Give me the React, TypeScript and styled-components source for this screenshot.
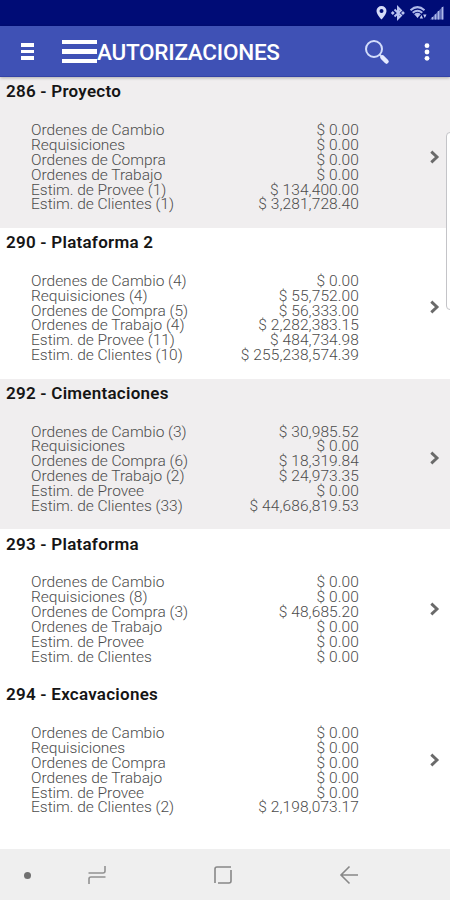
import React from "react";
import styled, { createGlobalStyle } from "styled-components";

const GlobalStyle = createGlobalStyle`
  * { box-sizing: border-box; }
  body { margin: 0; background: #fff; font-family: Roboto, "Liberation Sans", sans-serif; }
`;

const Screen = styled.div`
  position: relative;
  display: flex;
  flex-direction: column;
  width: 450px;
  height: 900px;
  overflow: hidden;
  background: #fff;
`;

const StatusBar = styled.header`
  display: flex;
  flex: none;
  justify-content: flex-end;
  align-items: center;
  height: 26px;
  padding-right: 6px;
  background: #000c76;
`;

const AppBar = styled.div`
  display: flex;
  flex: none;
  align-items: center;
  height: 51px;
  padding: 1px 0 0 21px;
  background: #3f51b5;
  border-bottom: 1px solid #3443a6;
  box-shadow: 0 1px 3px rgba(0, 0, 0, 0.28);
  z-index: 1;
`;

const Bars = styled.div<{ $width: number; $gap: number; $thick: number }>`
  display: flex;
  flex-direction: column;
  gap: ${(p) => p.$gap}px;
  width: ${(p) => p.$width}px;
  &::before, &::after, i { content: ""; display: block; height: ${(p) => p.$thick}px; background: #fff; }
`;

const MenuGroup = styled.div`
  display: flex;
  align-items: center;
  gap: 28px;
`;

const Title = styled.h1`
  flex: 1;
  margin: 0;
  font-size: 22.5px;
  line-height: 28px;
  font-weight: 500;
  letter-spacing: -0.25px;
  color: #fff;
`;

const Actions = styled.div`
  display: flex;
  align-items: center;
  gap: 34px;
  padding-right: 20.5px;
`;

const Projects = styled.main`
  flex: 1;
  min-height: 0;
`;

const Project = styled.section<{ $shaded: boolean }>`
  height: 150.75px;
  background: ${(p) => (p.$shaded ? "#f0eeef" : "#fff")};
`;

const ProjectName = styled.h2`
  margin: 0;
  padding: 4.4px 0 0 6px;
  height: 46px;
  font-size: 17px;
  line-height: 20px;
  font-weight: 600;
  letter-spacing: 0.25px;
  white-space: nowrap;
  color: #151515;
`;

const Details = styled.div`
  display: flex;
  padding-left: 31px;
`;

const Lines = styled.div`
  width: 328px;
`;

const Line = styled.div`
  display: flex;
  justify-content: space-between;
  height: 14.9px;
  font-size: 15.5px;
  line-height: 14.9px;
  font-weight: 300;
  white-space: nowrap;
  color: #4c4c4c;
`;

const Label = styled.span`
  letter-spacing: -0.02px;
`;

const Amount = styled.span`
  letter-spacing: 0.1px;
`;

const Chevron = styled.svg`
  margin: 26.5px 0 0 69.5px;
`;

const EdgeHandle = styled.div`
  position: absolute;
  top: 132px;
  right: -10px;
  width: 14px;
  height: 178px;
  border: 1px solid #c4c4c8;
  border-radius: 4px;
  background: #fff;
`;

const NavBar = styled.nav`
  display: grid;
  flex: none;
  grid-template-columns: 54px 86px 166px 86px;
  align-items: center;
  justify-items: center;
  height: 51px;
  padding-top: 1px;
  background: #efefef;
`;

const Dot = styled.span`
  width: 7px;
  height: 7px;
  border-radius: 50%;
  background: #707070;
`;

const projects: { name: string; rows: [string, string][] }[] = [
  { name: "286 - Proyecto", rows: [["Ordenes de Cambio", "0.00"], ["Requisiciones", "0.00"], ["Ordenes de Compra", "0.00"], ["Ordenes de Trabajo", "0.00"], ["Estim. de Provee (1)", "134,400.00"], ["Estim. de Clientes (1)", "3,281,728.40"]] },
  { name: "290 - Plataforma 2", rows: [["Ordenes de Cambio (4)", "0.00"], ["Requisiciones (4)", "55,752.00"], ["Ordenes de Compra (5)", "56,333.00"], ["Ordenes de Trabajo (4)", "2,282,383.15"], ["Estim. de Provee (11)", "484,734.98"], ["Estim. de Clientes (10)", "255,238,574.39"]] },
  { name: "292 - Cimentaciones", rows: [["Ordenes de Cambio (3)", "30,985.52"], ["Requisiciones", "0.00"], ["Ordenes de Compra (6)", "18,319.84"], ["Ordenes de Trabajo (2)", "24,973.35"], ["Estim. de Provee", "0.00"], ["Estim. de Clientes (33)", "44,686,819.53"]] },
  { name: "293 - Plataforma", rows: [["Ordenes de Cambio", "0.00"], ["Requisiciones (8)", "0.00"], ["Ordenes de Compra (3)", "48,685.20"], ["Ordenes de Trabajo", "0.00"], ["Estim. de Provee", "0.00"], ["Estim. de Clientes", "0.00"]] },
  { name: "294 - Excavaciones", rows: [["Ordenes de Cambio", "0.00"], ["Requisiciones", "0.00"], ["Ordenes de Compra", "0.00"], ["Ordenes de Trabajo", "0.00"], ["Estim. de Provee", "0.00"], ["Estim. de Clientes (2)", "2,198,073.17"]] },
];

const StatusIcons = () => (
  <svg width="70" height="16" viewBox="374 5 70 16" fill="none">
    <path fillRule="evenodd" fill="#d5dbf8" d="M381.5 6a5 5 0 0 0-5 5c0 3.4 5 8.5 5 8.500s5-5.100 5-8.500a5 5 0 0 0-5-5Zm0 3a2 2 0 1 1 0 4 2 2 0 0 1 0-4Z" />
    <path stroke="#b9c3f0" strokeWidth="2" d="m394.500 9.500 6.500 6-3 3v-11l3 3-6.500 6" />
    <path fill="#b9c3f0" d="m390.800 13 2-1.900 1.900 1.900-1.900 1.900Zm10.200 0 2-1.900 1.900 1.900-1.900 1.900Z" />
    <g stroke="#aeb9ea" strokeWidth="2">
      <path d="M410.500 10.200q7-6.200 14 0" />
      <path d="M412.700 12.700q4.800-4 9.600 0" />
      <path d="M414.800 15q2.700-2.200 5.400 0" />
    </g>
    <path fill="#c4ccf3" d="m415.500 15.500 2-1 2 1-2 2.500Zm4.200 3 1.700-3.500 1.700 3.500Zm3.400-4h3.400l-1.700 3.500Z" />
    <path fill="#5967b5" d="M430 19.500 443.500 6v13.500Z" />
    <path stroke="#aeb9ea" strokeWidth="1.500" d="M432.500 19.500v-2.500M435.500 19.500v-5.300M438.500 19.500v-8.500M442.500 19.500V7" />
  </svg>
);

const SearchIcon = () => (
  <svg width="26" height="26" viewBox="0 0 26 26" fill="none">
    <circle cx="10" cy="10" r="8" stroke="#d3ddfb" strokeWidth="2" />
    <path d="m15.500 15.500 3 3" stroke="#d3ddfb" strokeWidth="2" />
    <path d="m18.500 18.500 4 4" stroke="#e5eaff" strokeWidth="4.500" strokeLinecap="round" />
  </svg>
);

const OverflowIcon = () => (
  <svg width="6" height="20" viewBox="0 0 6 20" fill="#fff">
    <circle cx="3" cy="3.700" r="2.400" />
    <circle cx="3" cy="10" r="2.400" />
    <circle cx="3" cy="16.300" r="2.400" />
  </svg>
);

export default function App() {
  return (
    <Screen>
      <GlobalStyle />
      <StatusBar><StatusIcons /></StatusBar>
      <AppBar>
        <MenuGroup>
          <Bars $width={13} $gap={3} $thick={3.4}><i /></Bars>
          <Bars $width={35} $gap={5.5} $thick={4.2}><i /></Bars>
        </MenuGroup>
        <Title>AUTORIZACIONES</Title>
        <Actions>
          <SearchIcon />
          <OverflowIcon />
        </Actions>
      </AppBar>
      <Projects>
        {projects.map((project, index) => (
          <Project key={project.name} $shaded={index === 0 || index === 2}>
            <ProjectName>{project.name}</ProjectName>
            <Details>
              <Lines>
                {project.rows.map(([label, amount]) => (
                  <Line key={label}>
                    <Label>{label}</Label>
                    <Amount>$ {amount}</Amount>
                  </Line>
                ))}
              </Lines>
              <Chevron width="12" height="14" viewBox="0 0 12 14" fill="none">
                <path d="m2.300 1.600 5.700 5.400-5.700 5.400" stroke="#6a6a6a" strokeWidth="2.900" />
              </Chevron>
            </Details>
          </Project>
        ))}
      </Projects>
      <NavBar>
        <Dot />
        <svg width="20" height="20" viewBox="0 0 20 20" fill="none" stroke="#929292" strokeWidth="1.600">
          <path d="M1.500 8H16q2 0 2-2V1M18.500 12H4q-2 0-2 2v5" />
        </svg>
        <svg width="20" height="20" viewBox="0 0 20 20" fill="none" stroke="#888" strokeWidth="1.600">
          <path d="M2 18V4q0-2 2-2h14M5 18h11q2 0 2-2V5" />
        </svg>
        <svg width="20" height="20" viewBox="0 0 20 20" fill="none" stroke="#888" strokeWidth="1.600">
          <path d="M10.500 1.500 2 10l8.500 8.500M2 10h17" />
        </svg>
      </NavBar>
      <EdgeHandle />
    </Screen>
  );
}
